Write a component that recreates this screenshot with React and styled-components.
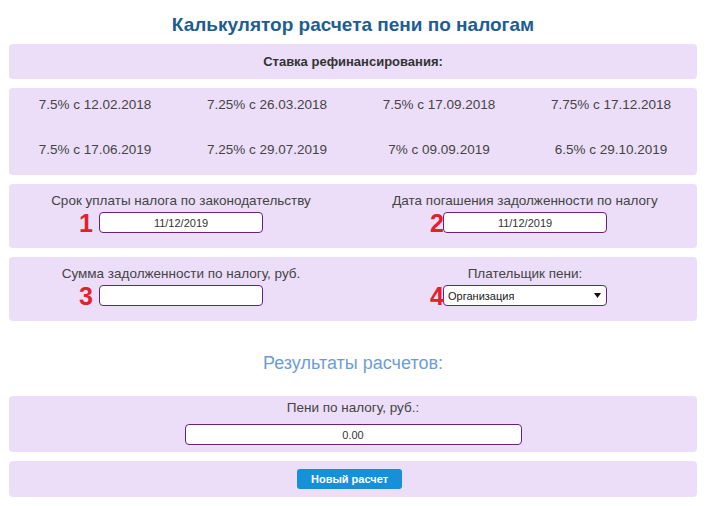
import React from "react";
import styled, { createGlobalStyle } from "styled-components";

const GlobalStyle = createGlobalStyle`
  html, body { margin: 0; padding: 0; background: #fff; }
  body { font-family: "Liberation Sans", Arial, sans-serif; color: #444; }
  * { box-sizing: border-box; }
`;

const Page = styled.div`
  width: 688px;
  margin-left: 9px;
  display: flex;
  flex-direction: column;
`;

const Title = styled.h1`
  margin: 0;
  padding-top: 6px;
  height: 44px;
  line-height: 38px;
  font-size: 19px;
  font-weight: bold;
  color: #1e5d92;
  text-align: center;
`;

const Panel = styled.div`
  background: #ecdef9;
  border-radius: 4px;
  margin-bottom: 9px;
`;

const HeaderPanel = styled(Panel)`
  height: 35px;
  display: flex;
  align-items: center;
  justify-content: center;
  font-size: 13px;
  font-weight: bold;
  color: #333;
`;

const RatesGrid = styled(Panel)`
  display: grid;
  grid-template-columns: repeat(4, 1fr);
  grid-auto-rows: 22px;
  row-gap: 23px;
  padding: 6px 0 14px;
`;

const Rate = styled.div`
  font-size: 13.5px;
  line-height: 22px;
  text-align: center;
  color: #444;
`;

const FieldsPanel = styled(Panel)`
  display: grid;
  grid-template-columns: 1fr 1fr;
  padding: 9px 0 15px;
`;

const Field = styled.div`
  display: flex;
  flex-direction: column;
  align-items: center;
  gap: ${(p) => p.$gap || 3}px;
`;

const Label = styled.div`
  font-size: 13.5px;
  line-height: 16px;
  color: #444;
  white-space: nowrap;
`;

const InputWrap = styled.div`
  position: relative;
  width: ${(p) => p.$width || 164}px;
  height: 21px;
`;

const Input = styled.input`
  width: 100%;
  height: 100%;
  border: 1px solid #6d1f7c;
  border-radius: 4px;
  background: #fff;
  font-family: "Liberation Sans", Arial, sans-serif;
  font-size: 11px;
  color: #333;
  text-align: center;
  padding: 0 4px;
  outline: none;
`;

const Select = styled.select`
  width: 100%;
  height: 100%;
  border: 1px solid #6d1f7c;
  border-radius: 4px;
  background: #fff;
  font-family: "Liberation Sans", Arial, sans-serif;
  font-size: 11px;
  color: #222;
  padding: 0 0 0 4px;
  appearance: none;
  -webkit-appearance: none;
  outline: none;
`;

const Arrow = styled.svg`
  position: absolute;
  right: 6px;
  top: 8px;
  pointer-events: none;
`;

const Marker = styled.span`
  position: absolute;
  top: -1px;
  right: calc(100% + ${(p) => p.$gap}px);
  font-size: 25px;
  line-height: 25px;
  font-weight: bold;
  color: #e3202b;
`;

const ResultsTitle = styled.h2`
  margin: 21px 0 21px;
  font-size: 18px;
  font-weight: normal;
  line-height: 24px;
  color: #6e9dd6;
  text-align: center;
`;

const ResultPanel = styled(Panel)`
  padding: 4px 0 7px;
  display: flex;
  justify-content: center;
`;

const ButtonPanel = styled(Panel)`
  padding: 8px 0;
  display: flex;
  justify-content: center;
`;

const Button = styled.button`
  width: 105px;
  height: 20px;
  margin-right: 7px;
  border: none;
  border-radius: 3px;
  background: #1690d8;
  color: #fff;
  font-family: "Liberation Sans", Arial, sans-serif;
  font-size: 11px;
  font-weight: bold;
  padding: 0;
  cursor: pointer;
`;

const rates = [
  "7.5% с 12.02.2018",
  "7.25% с 26.03.2018",
  "7.5% с 17.09.2018",
  "7.75% с 17.12.2018",
  "7.5% с 17.06.2019",
  "7.25% с 29.07.2019",
  "7% с 09.09.2019",
  "6.5% с 29.10.2019",
];

export default function App() {
  return (
    <>
      <GlobalStyle />
      <Page>
        <Title>Калькулятор расчета пени по налогам</Title>
        <HeaderPanel>Ставка рефинансирования:</HeaderPanel>
        <RatesGrid>
          {rates.map((r) => (
            <Rate key={r}>{r}</Rate>
          ))}
        </RatesGrid>
        <FieldsPanel>
          <Field>
            <Label>Срок уплаты налога по законодательству</Label>
            <InputWrap>
              <Marker $gap={6}>1</Marker>
              <Input defaultValue="11/12/2019" />
            </InputWrap>
          </Field>
          <Field>
            <Label>Дата погашения задолженности по налогу</Label>
            <InputWrap>
              <Marker $gap={-1}>2</Marker>
              <Input defaultValue="11/12/2019" />
            </InputWrap>
          </Field>
        </FieldsPanel>
        <FieldsPanel>
          <Field>
            <Label>Сумма задолженности по налогу, руб.</Label>
            <InputWrap>
              <Marker $gap={6}>3</Marker>
              <Input defaultValue="" />
            </InputWrap>
          </Field>
          <Field>
            <Label>Плательщик пени:</Label>
            <InputWrap>
              <Marker $gap={-1}>4</Marker>
              <Select defaultValue="org">
                <option value="org">Организация</option>
                <option value="ip">Индивидуальный предприниматель</option>
                <option value="fl">Физическое лицо</option>
              </Select>
              <Arrow width="7" height="5" viewBox="0 0 7 5">
                <path d="M0 0 H7 L3.5 5 Z" fill="#111" />
              </Arrow>
            </InputWrap>
          </Field>
        </FieldsPanel>
        <ResultsTitle>Результаты расчетов:</ResultsTitle>
        <ResultPanel>
          <Field $gap={8}>
            <Label>Пени по налогу, руб.:</Label>
            <InputWrap $width={337}>
              <Input defaultValue="0.00" readOnly />
            </InputWrap>
          </Field>
        </ResultPanel>
        <ButtonPanel>
          <Button>Новый расчет</Button>
        </ButtonPanel>
      </Page>
    </>
  );
}
